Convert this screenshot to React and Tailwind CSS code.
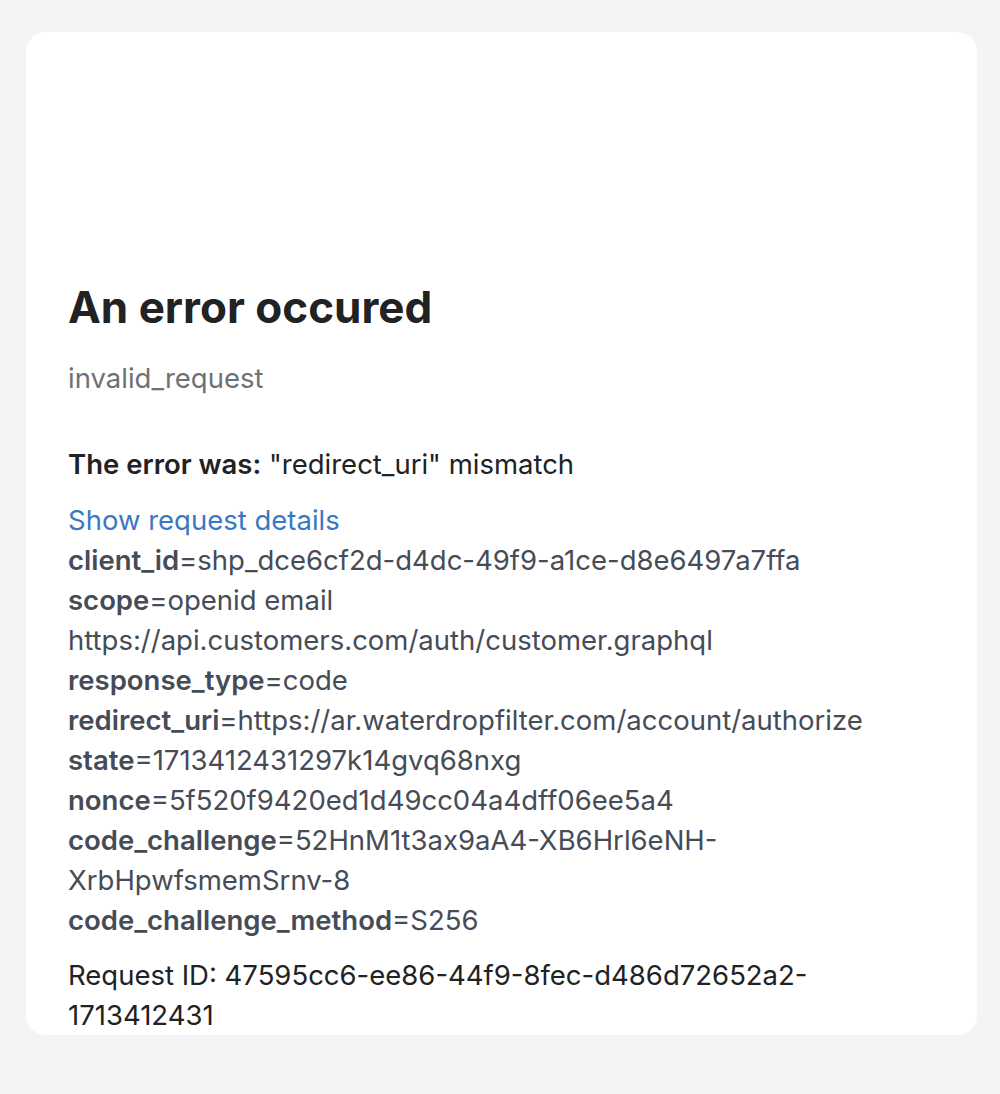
export default function App() {
  const rows = [
    ["client_id", "shp_dce6cf2d-d4dc-49f9-a1ce-d8e6497a7ffa"],
    ["scope", "openid email https://api.customers.com/auth/customer.graphql"],
    ["response_type", "code"],
    ["redirect_uri", "https://ar.waterdropfilter.com/account/authorize"],
    ["state", "1713412431297k14gvq68nxg"],
    ["nonce", "5f520f9420ed1d49cc04a4dff06ee5a4"],
    ["code_challenge", "52HnM1t3ax9aA4-XB6Hrl6eNH-XrbHpwfsmemSrnv-8"],
    ["code_challenge_method", "S256"],
  ];
  return (
    <div className="min-h-[1094px] w-[1000px] bg-[#f4f4f4] pt-[32px] font-['Inter',sans-serif]">
      <div className="ml-[26px] w-[951px] h-[1003px] overflow-hidden rounded-[20px] bg-white px-[42px] pt-[248px]">
        <h1 className="text-[44px] font-bold leading-[54px] text-[#202223]">An error occured</h1>
        <p className="mt-[24px] text-[27.5px] leading-[40px] text-[#6d7175]">invalid_request</p>
        <p className="mt-[46px] text-[27.5px] leading-[40px] text-[#202223]">
          <span className="font-semibold">The error was:</span> "redirect_uri" mismatch
        </p>
        <div className="mt-[16px] text-[27.5px] leading-[40px] text-[#3a78c2]">Show request details</div>
        <div className="text-[27.5px] leading-[40px] text-[#454c57]">
          {rows.map(([k, v]) => (
            <div key={k}>
              <span className="font-semibold">{k}</span>={v}
            </div>
          ))}
        </div>
        <p className="mt-[15px] text-[27.5px] leading-[40px] text-[#202223]">
          Request ID: 47595cc6-ee86-44f9-8fec-d486d72652a2-1713412431
        </p>
      </div>
    </div>
  );
}
